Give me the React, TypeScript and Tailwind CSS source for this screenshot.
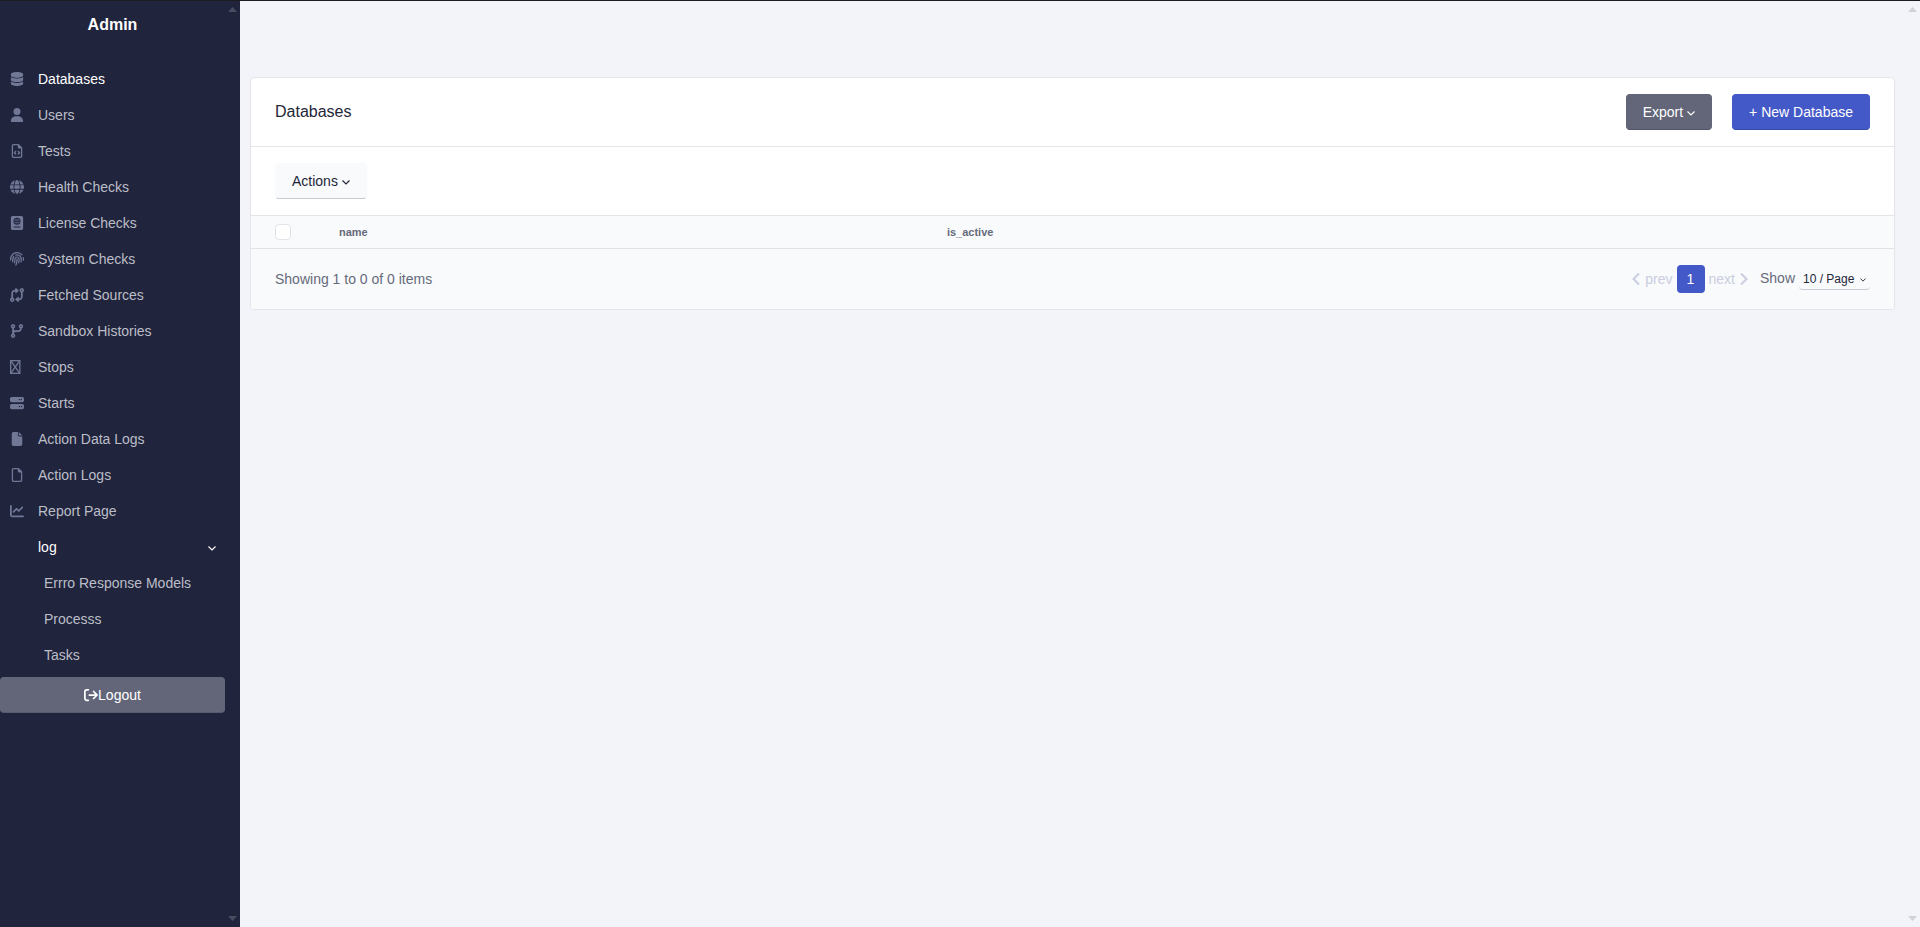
import type { ReactNode } from "react";
import type { IconType } from "react-icons";
import {
    FaArrowRightFromBracket,
    FaChartLine,
    FaCodeBranch,
    FaCodeCompare,
    FaDatabase,
    FaFile,
    FaFingerprint,
    FaGlobe,
    FaPassport,
    FaRegFile,
    FaRegFileCode,
    FaServer,
    FaUser,
} from "react-icons/fa6";

function CrossedBox({ className }: { className?: string }) {
    return (
        <svg viewBox="0 0 384 512" className={className} fill="none" stroke="currentColor" strokeWidth="48">
            <rect x="24" y="24" width="336" height="464" />
            <path d="M40 40 344 472M344 40 40 472" />
        </svg>
    );
}

type NavItem = { label: string; icon: IconType | typeof CrossedBox; active?: boolean };

const navItems: NavItem[] = [
    { label: "Databases", icon: FaDatabase, active: true },
    { label: "Users", icon: FaUser },
    { label: "Tests", icon: FaRegFileCode },
    { label: "Health Checks", icon: FaGlobe },
    { label: "License Checks", icon: FaPassport },
    { label: "System Checks", icon: FaFingerprint },
    { label: "Fetched Sources", icon: FaCodeCompare },
    { label: "Sandbox Histories", icon: FaCodeBranch },
    { label: "Stops", icon: CrossedBox },
    { label: "Starts", icon: FaServer },
    { label: "Action Data Logs", icon: FaFile },
    { label: "Action Logs", icon: FaRegFile },
    { label: "Report Page", icon: FaChartLine },
];

const logItems = ["Errro Response Models", "Processs", "Tasks"];

function Caret({ className = "mt-0.5 h-[5px] w-2" }: { className?: string }) {
    return (
        <svg viewBox="0 0 8 5" className={className} fill="none" stroke="currentColor" strokeWidth="1.2">
            <path d="M0.5 0.5 4 4 7.5 0.5" />
        </svg>
    );
}

// Gutter with the two arrows of a classic scrollbar
function ScrollGutter({ className }: { className: string }) {
    return (
        <div aria-hidden="true" className={`flex w-[15px] shrink-0 flex-col items-center justify-between py-1.5 ${className}`}>
            <svg viewBox="0 0 9 5" className="h-[5px] w-[9px]" fill="currentColor">
                <path d="M4.5 0 9 5H0z" />
            </svg>
            <svg viewBox="0 0 9 5" className="h-[5px] w-[9px]" fill="currentColor">
                <path d="M4.5 5 9 0H0z" />
            </svg>
        </div>
    );
}

function Button({ className, children }: { className: string; children: ReactNode }) {
    return (
        <button type="button" className={`flex h-9 items-center justify-center rounded border px-4 text-sm ${className}`}>
            {children}
        </button>
    );
}

function Sidebar() {
    return (
        <aside className="flex w-60 shrink-0 bg-[#20243d]">
            <div className="flex-1">
                <h1 className="pt-3 text-center text-base font-bold text-white">Admin</h1>
                <nav className="mt-6 text-sm text-[#bcbec7]">
                    {navItems.map(({ label, icon: Icon, active }) => (
                        <a key={label} href="#" className={`flex h-9 items-center pl-2.5 ${active ? "text-white" : ""}`}>
                            <span className="w-7 text-[#717896]">
                                <Icon className="h-3.5 w-auto" />
                            </span>
                            {label}
                        </a>
                    ))}
                    <button type="button" className="flex h-9 w-full items-center justify-between pr-[9px] pl-[38px] text-white">
                        log
                        <Caret />
                    </button>
                    {logItems.map((label) => (
                        <a key={label} href="#" className="flex h-9 items-center pl-11">
                            {label}
                        </a>
                    ))}
                </nav>
                <Button className="mt-1 w-full border-[#636679] border-b-[#585b6d] bg-[#636679] text-white">
                    <FaArrowRightFromBracket className="size-3.5" />
                    Logout
                </Button>
            </div>
            <ScrollGutter className="text-[#4a4c60]" />
        </aside>
    );
}

function Pagination() {
    return (
        <div className="flex items-center text-[#c9cde0]">
            <button type="button" disabled className="flex items-center gap-[5px]">
                <svg viewBox="0 0 8 12" className="h-3 w-2" fill="none" stroke="currentColor" strokeWidth="2">
                    <path d="M7 0.5 1.5 6 7 11.5" />
                </svg>
                prev
            </button>
            <button type="button" className="mx-1 size-7 rounded bg-[#4459c8] text-white">
                1
            </button>
            <button type="button" disabled className="flex items-center gap-[5px]">
                next
                <svg viewBox="0 0 8 12" className="h-3 w-2" fill="none" stroke="currentColor" strokeWidth="2">
                    <path d="M1 0.5 6.5 6 1 11.5" />
                </svg>
            </button>
            <label htmlFor="page-size" className="ml-3 pb-0.5 text-[#666a7b]">
                Show
            </label>
            <div className="relative ml-1 flex items-center text-[#232637]">
                <select
                    id="page-size"
                    className="h-[22px] w-[71px] appearance-none rounded-sm border-b border-[#c8cbd3] bg-[#f9fafc] pt-0.5 pl-1 text-xs"
                >
                    <option>10 / Page</option>
                </select>
                <Caret className="pointer-events-none absolute right-1 mt-0.5 h-1 w-1.5" />
            </div>
        </div>
    );
}

export default function App() {
    return (
        <div className="flex min-h-screen border-t border-[#1c1c1e] bg-[#f3f4fa] font-['Liberation_Sans',Arial,sans-serif] text-[#232637]">
            <Sidebar />
            <main className="flex-1 px-2.5 pt-[76px]">
                <section className="overflow-hidden rounded border border-[#e3e5e9] bg-white">
                    <div className="flex items-center justify-between border-b border-[#e3e5e9] px-6 py-4">
                        <h2 className="text-base">Databases</h2>
                        <div className="flex gap-5">
                            <Button className="gap-1 border-[#636679] border-b-[#52556a] bg-[#636679] text-white">
                                Export
                                <Caret />
                            </Button>
                            <Button className="border-[#4459c8] border-b-[#394ca8] bg-[#4459c8] text-white">+ New Database</Button>
                        </div>
                    </div>
                    <div className="border-b border-[#e3e5e9] px-6 py-4">
                        <Button className="gap-1 border-[#f9fafc] border-b-[#c8cbd3] bg-[#f9fafc]">
                            Actions
                            <Caret />
                        </Button>
                    </div>
                    <table className="w-full table-fixed bg-[#f9fafc] text-left text-[11px] text-[#666a7b]">
                        <thead>
                            <tr className="h-8 border-b border-[#e0e2e6]">
                                <th className="w-20 pl-6">
                                    <input
                                        type="checkbox"
                                        aria-label="Select all"
                                        className="block size-4 appearance-none rounded border border-[#e1e3e8] bg-white"
                                    />
                                </th>
                                <th className="w-[37%] px-2 font-bold">name</th>
                                <th className="px-2 font-bold">is_active</th>
                            </tr>
                        </thead>
                        <tbody></tbody>
                    </table>
                    <div className="flex items-center justify-between bg-[#f9fafc] px-6 py-4 text-sm">
                        <p className="text-[#666a7b]">Showing 1 to 0 of 0 items</p>
                        <Pagination />
                    </div>
                </section>
            </main>
            <ScrollGutter className="text-[#d0d1da]" />
        </div>
    );
}
